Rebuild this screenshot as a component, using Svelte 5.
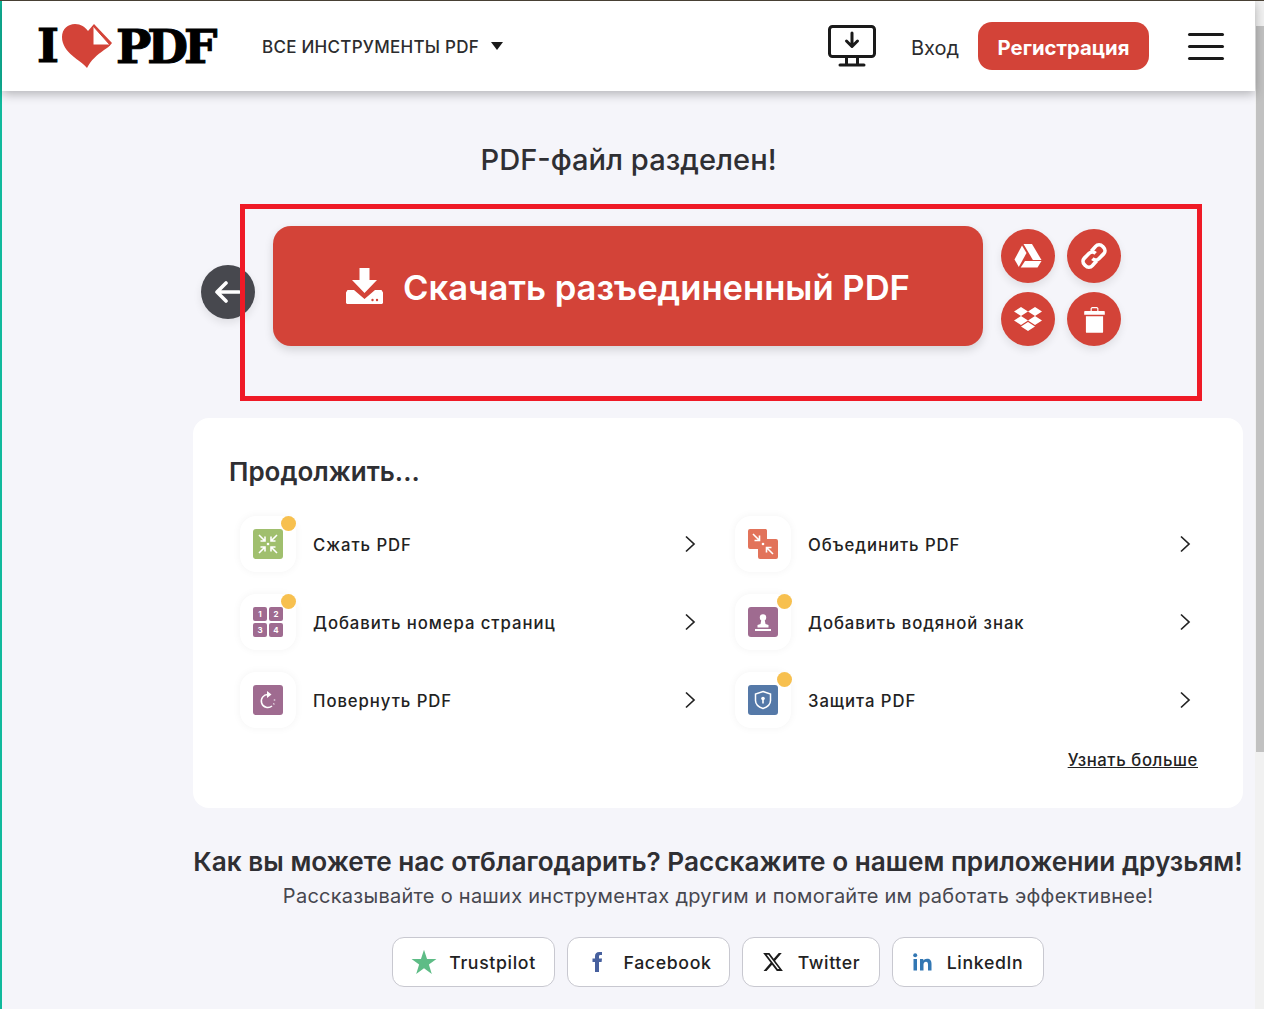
<script>
  const tools = [
    { key: 'compress', label: 'Сжать PDF', dot: true },
    { key: 'merge', label: 'Объединить PDF', dot: false },
    { key: 'numbers', label: 'Добавить номера страниц', dot: true },
    { key: 'stamp', label: 'Добавить водяной знак', dot: true },
    { key: 'rotate', label: 'Повернуть PDF', dot: false },
    { key: 'protect', label: 'Защита PDF', dot: true }
  ];
</script>

<div class="root">
  <div class="topline"></div>
  <div class="body">
    <div class="rail"></div>
    <main class="main">
      <header class="header">
        <div class="logo">
          <span class="logo-i">I</span>
          <svg class="heart" viewBox="0 0 52 46" width="52" height="46" aria-hidden="true">
            <path d="M26 45C20 37 1 30 1 14 1 6 7 1 14 1c6 0 10 3 13 7l6-7 18 19c-2 3-5 5-8 7-7 5-13 10-17 18z" fill="#d34338"/>
            <path d="M32 3v19h17z" fill="#fff" stroke="#d34338" stroke-width="1"/>
          </svg>
          <span class="logo-pdf">PDF</span>
        </div>
        <div class="nav">ВСЕ ИНСТРУМЕНТЫ PDF<span class="caret"></span></div>
        <div class="right">
          <svg class="monitor" viewBox="0 0 48 42" width="48" height="42" fill="none" stroke="#1a1a1a" stroke-width="3" aria-hidden="true">
            <rect x="1.500" y="1.500" width="45" height="30" rx="3"/>
            <path d="M24 8v13M18.500 16l5.500 5.500 5.500-5.500" stroke-linecap="round" stroke-linejoin="round"/>
            <path d="M18.500 32v7M29.500 32v7M12 40h24" stroke-linecap="round"/>
          </svg>
          <span class="login">Вход</span>
          <span class="register">Регистрация</span>
          <div class="burger"><i></i><i></i><i></i></div>
        </div>
      </header>

      <h1 class="title">PDF-файл разделен!</h1>

      <section class="actions">
        <div class="circle back">
          <svg viewBox="0 0 26 22" width="26" height="22" fill="none" stroke="#fff" stroke-width="3.600" stroke-linecap="round" stroke-linejoin="round" aria-hidden="true">
            <path d="M25 11H3M12 2 3 11l9 9"/>
          </svg>
        </div>
        <div class="download">
          <svg viewBox="0 0 37 36" width="37" height="36" fill="#fff" aria-hidden="true">
            <path d="M13.500 0h10v12H31L18.500 25 6 12h7.500z"/>
            <path d="M0 24.500 1.500 22H8l10.500 9L29 22h6.500l1.500 2.500V35l-1 1H1l-1-1z"/>
            <circle cx="26.500" cy="32" r="1.200" fill="#d34338"/><circle cx="31" cy="32" r="1.200" fill="#d34338"/>
          </svg>
          <span>Скачать разъединенный PDF</span>
        </div>
        <div class="side">
          <div class="circle red">
            <svg viewBox="0 0 28 26" width="28" height="26" fill="#fff" aria-hidden="true">
              <path d="M9.500 1h8.500l9.500 16h-8.600z"/><path d="M8 2.500 12.500 10 4.800 24 .5 16.500z"/><path d="M11 18h16.500l-4 6.500H6.700z"/>
            </svg>
          </div>
          <div class="circle red">
            <svg viewBox="0 0 28 28" width="30" height="30" fill="none" stroke="#fff" stroke-width="3.400" aria-hidden="true">
              <path d="M11.500 9.500l4-4.500a4.300 4.300 0 0 1 6.500 0l1 1a4.300 4.300 0 0 1 0 6l-4.500 4.500a4.300 4.300 0 0 1-6 0"/>
              <path d="M16.500 18.500l-4 4.500a4.300 4.300 0 0 1-6.500 0l-1-1a4.300 4.300 0 0 1 0-6l4.500-4.500a4.300 4.300 0 0 1 6 0"/>
            </svg>
          </div>
          <div class="circle red">
            <svg viewBox="0 0 24 24" width="28" height="28" fill="#fff" aria-hidden="true">
              <path d="M6 1.807L0 5.629l6 3.822 6.001-3.822L6 1.807zM18 1.807l-6 3.822 6 3.822 6-3.822-6-3.822zM0 13.274l6 3.822 6.001-3.822L6 9.452l-6 3.822zM18 9.452l-6 3.822 6 3.822 6-3.822-6-3.822zM6 18.371l6.001 3.822 6-3.822-6-3.822L6 18.371z"/>
            </svg>
          </div>
          <div class="circle red">
            <svg viewBox="0 0 22 28" width="21" height="27" fill="#fff" aria-hidden="true">
              <path d="M1 5h20a.8.8 0 0 1 .8.8V9H.2V5.800A.8.8 0 0 1 1 5z"/>
              <path d="M7.500 5V2.500L8.500 1.500h5l1 1V5" fill="none" stroke="#fff" stroke-width="1.200"/>
              <path d="M2 10.500h18V27a1 1 0 0 1-1 1H3a1 1 0 0 1-1-1z"/>
            </svg>
          </div>
        </div>
      </section>

      <section class="card">
        <h2 class="card-title">Продолжить...</h2>
        <div class="grid">
          {#each tools as t (t.key)}
            <div class="row">
              <div class="iconbox">
                {#if t.dot}<span class="dot"></span>{/if}
                {#if t.key === 'compress'}
                  <svg viewBox="0 0 30 30" width="30" height="30" aria-hidden="true">
                    <rect width="30" height="30" rx="3" fill="#a0bf6e"/>
                    <g fill="none" stroke="#fff" stroke-width="1.600">
                      <path d="M6 6l6 6M12 7.500V12H7.500M24 6l-6 6M18 7.500V12h4.500M6 24l6-6M12 22.500V18H7.500M24 24l-6-6M18 22.500V18h4.500"/>
                    </g>
                    <circle cx="15" cy="15" r="1.300" fill="#fff"/>
                  </svg>
                {:else if t.key === 'merge'}
                  <svg viewBox="0 0 30 30" width="30" height="30" aria-hidden="true">
                    <path d="M2 0h16a2 2 0 0 1 1 2v8h9a2 2 0 0 1 2 2v16a2 2 0 0 1-2 2H12a2 2 0 0 1-2-2v-8H2a2 2 0 0 1-2-2V2a2 2 0 0 1 2-2z" fill="#e2735a"/>
                    <path d="M5 5l6 6M11.500 6.500V11.500H6.500M25 25l-6-6M18.500 23.500V18.500h5" fill="none" stroke="#fff" stroke-width="1.600"/>
                    <circle cx="15" cy="15" r="1.300" fill="#fff"/>
                  </svg>
                {:else if t.key === 'numbers'}
                  <svg class="num" viewBox="0 0 30 30" width="30" height="30" aria-hidden="true">
                    <rect width="14" height="14" rx="2" fill="#9f6b90"/><rect x="16" width="14" height="14" rx="2" fill="#9f6b90"/>
                    <rect y="16" width="14" height="14" rx="2" fill="#9f6b90"/><rect x="16" y="16" width="14" height="14" rx="2" fill="#9f6b90"/>
                    <text x="7" y="10">1</text><text x="23" y="10">2</text><text x="7" y="26">3</text><text x="23" y="26">4</text>
                  </svg>
                {:else if t.key === 'stamp'}
                  <svg viewBox="0 0 30 30" width="30" height="30" aria-hidden="true">
                    <rect width="30" height="30" rx="3" fill="#9f6b90"/>
                    <circle cx="15" cy="10.500" r="3.200" fill="#fff"/>
                    <path d="M13.500 12h3l1 5 3 1v2.500H9.500V18l3-1z" fill="#fff"/>
                    <rect x="7" y="22" width="16" height="2" fill="#fff"/>
                  </svg>
                {:else if t.key === 'rotate'}
                  <svg viewBox="0 0 30 30" width="30" height="30" aria-hidden="true">
                    <rect width="30" height="30" rx="3" fill="#9f6b90"/>
                    <path d="M15 9.500a6.500 6.500 0 1 0 4 11.500" fill="none" stroke="#fff" stroke-width="1.500"/>
                    <path d="M14 6v7l4.500-3.500z" fill="#fff"/>
                    <path d="M21.500 14.500v1M21 18.500l-.4.800" stroke="#fff" stroke-width="1.500"/>
                  </svg>
                {:else}
                  <svg viewBox="0 0 30 30" width="30" height="30" aria-hidden="true">
                    <rect width="30" height="30" rx="3" fill="#5579a8"/>
                    <path d="M15 6.500 22.500 9v6.500c0 4-3 6.500-7.500 8-4.500-1.500-7.500-4-7.500-8V9z" fill="none" stroke="#fff" stroke-width="1.500"/>
                    <circle cx="15" cy="13.500" r="1.800" fill="#fff"/><rect x="14.200" y="14" width="1.600" height="4.500" fill="#fff"/>
                  </svg>
                {/if}
              </div>
              <span class="label">{t.label}</span>
              <svg class="chev" viewBox="0 0 12 18" width="12" height="18" fill="none" stroke="#222" stroke-width="1.700" aria-hidden="true"><path d="M2 1.500 10 9l-8 7.500"/></svg>
            </div>
          {/each}
        </div>
        <div class="more"><span>Узнать больше</span></div>
      </section>

      <section class="share">
        <h2>Как вы можете нас отблагодарить? Расскажите о нашем приложении друзьям!</h2>
        <p>Рассказывайте о наших инструментах другим и помогайте им работать эффективнее!</p>
        <div class="socials">
          <div class="social s1">
            <svg viewBox="0 0 24 24" width="26" height="26" aria-hidden="true"><path d="M12 .8l2.800 8.400h8.700l-7 5.200 2.700 8.600L12 17.700 4.800 23l2.700-8.600-7-5.200h8.700z" fill="#5ebc86"/></svg>
            <span>Trustpilot</span>
          </div>
          <div class="social s2">
            <svg viewBox="0 0 24 24" width="24" height="24" aria-hidden="true"><path d="M14 8.500V6.500c0-.9.3-1.500 1.600-1.500H17V2h-2.600C11.300 2 10 3.900 10 6.200V8.500H7.500V12H10v10h4V12h2.600l.4-3.500z" fill="#47609e"/></svg>
            <span>Facebook</span>
          </div>
          <div class="social s3">
            <svg viewBox="0 0 24 24" width="22" height="22" aria-hidden="true"><path d="M18.244 2.250h3.308l-7.227 8.260 8.502 11.240H16.170l-5.214-6.817L4.990 21.750H1.680l7.730-8.835L1.254 2.250H8.080l4.713 6.231zm-1.161 17.520h1.833L7.084 4.126H5.117z" fill="#1b1b1b"/></svg>
            <span>Twitter</span>
          </div>
          <div class="social s4">
            <svg viewBox="0 0 20 18" width="20" height="18" aria-hidden="true"><g fill="#3277b3"><circle cx="2.200" cy="2.200" r="2"/><rect x=".5" y="6" width="3.500" height="11.500"/><path d="M7 6h3.300v1.600C11 6.500 12.300 5.700 14 5.700c3.300 0 4.500 2 4.500 5.200v6.600H15V11.500c0-1.700-.5-2.800-2-2.800s-2.500 1.100-2.500 2.800v6H7z"/></g></svg>
            <span>LinkedIn</span>
          </div>
        </div>
      </section>
    </main>
    <div class="scrollbar"><div class="thumb"></div></div>
  </div>
  <div class="highlight"></div>
</div>

<style>
  :global(body) { overflow: hidden; }
  .root {
    position: relative;
    width: 1264px;
    height: 1009px;
    overflow: hidden;
    display: flex;
    flex-direction: column;
    font-family: Inter, "Noto Sans", sans-serif;
    background: #f5f5fa;
    color: #222;
  }
  .topline { height: 1px; background: #4d4538; flex: none; }
  .body { display: flex; flex: 1; min-height: 0; }
  .rail { width: 2px; background: #10b99c; flex: none; }
  .main { width: 1253px; flex: none; }
  .scrollbar { flex: 1; background: #f1f1f1; padding-top: 25px; }
  .thumb { height: 726px; background: #c1c1c1; margin-left: 1px; }

  .header {
    height: 90px;
    background: #fff;
    box-shadow: 0 3px 10px rgba(0, 0, 0, 0.28);
    display: flex;
    align-items: center;
    padding: 0 31px 0 35px;
    position: relative;
  }
  .logo { display: flex; align-items: center; width: 225px; height: 46px; color: #000; }
  .logo span {
    font-family: "DejaVu Serif", serif;
    font-weight: 700;
    font-size: 47px;
    line-height: 46px;
    -webkit-text-stroke: 1.100px #000;
  }
  .logo-i { margin-right: 2px; letter-spacing: 0; }
  .heart { flex: none; margin: 0 3px 0 0; }
  .logo-pdf { letter-spacing: -4px; margin-top: 2px; }
  .nav {
    font-size: 17px;
    font-weight: 500;
    letter-spacing: 0.27px;
    color: #2c2c2e;
    display: flex;
    align-items: center;
    white-space: nowrap;
    padding-top: 2px;
  }
  .caret {
    width: 0;
    height: 0;
    margin-left: 12px;
    margin-top: -2px;
    border-left: 6px solid transparent;
    border-right: 6px solid transparent;
    border-top: 8px solid #1a1a1a;
  }
  .right { margin-left: auto; display: flex; align-items: center; }
  .monitor { margin-right: 35px; }
  .login { font-size: 20px; color: #2c2c2e; margin-right: 19px; padding-top: 3px; }
  .register {
    width: 171px;
    height: 48px;
    padding-top: 3px;
    box-sizing: border-box;
    background: #d34338;
    border-radius: 14px;
    color: #fff;
    font-size: 20.300px;
    font-weight: 700;
    display: flex;
    align-items: center;
    justify-content: center;
    margin-right: 39px;
  }
  .burger { width: 36px; display: flex; flex-direction: column; gap: 9px; }
  .burger i { height: 3px; background: #1a1a1a; border-radius: 2px; display: block; }

  .title {
    margin: 0;
    padding-top: 50px;
    height: 85px;
    box-sizing: content-box;
    text-align: center;
    font-size: 29.100px;
    line-height: 38px;
    font-weight: 500;
    color: #2f2f33;
  }
  .actions { display: flex; height: 120px; margin-bottom: 72px; padding-left: 199px; }
  .circle {
    width: 54px;
    height: 54px;
    border-radius: 50%;
    display: flex;
    align-items: center;
    justify-content: center;
    flex: none;
    box-shadow: 0 4px 8px rgba(0, 0, 0, 0.09);
  }
  .back { background: #47484e; margin: 39px 18px 0 0; }
  .back svg { margin-right: 2px; }
  .red { background: #d34338; }
  .download {
    width: 710px;
    height: 120px;
    background: #d34338;
    border-radius: 18px;
    box-shadow: 0 4px 10px rgba(0, 0, 0, 0.14);
    display: flex;
    align-items: center;
    justify-content: center;
    gap: 20px;
    color: #fff;
    font-size: 34.600px;
    font-weight: 600;
  }
  .download span { padding-top: 1px; }
  .side {
    margin-left: 18px;
    padding-top: 3px;
    display: grid;
    grid-template-columns: 54px 54px;
    grid-auto-rows: 54px;
    column-gap: 12px;
    row-gap: 9px;
  }

  .card {
    margin-left: 191px;
    width: 1050px;
    height: 390px;
    box-sizing: border-box;
    background: #fff;
    border-radius: 16px;
    padding: 36px 45px 0 36px;
  }
  .card-title { margin: 0 0 26px; font-size: 26px; line-height: 36px; font-weight: 600; color: #2f2f33; }
  .grid { display: grid; grid-template-columns: 495px 495px; padding-left: 11px; margin-right: -50px; grid-auto-rows: 78px; }
  .row { display: flex; align-items: flex-start; }
  .row:nth-child(even) .dot { right: -1px; }
  .iconbox {
    position: relative;
    width: 56px;
    height: 56px;
    border-radius: 16px;
    background: #fff;
    box-shadow: 0 0 8px rgba(0, 0, 0, 0.05);
    display: flex;
    align-items: center;
    justify-content: center;
    flex: none;
  }
  .dot { position: absolute; top: 0; right: 0; width: 15px; height: 15px; border-radius: 50%; background: #f7c04f; }
  .num text { font: 700 8px Inter, sans-serif; fill: #fff; text-anchor: middle; }
  .label {
    margin-left: 17px;
    padding-top: 1px;
    line-height: 56px;
    font-size: 16.700px;
    font-weight: 500;
    letter-spacing: 0.95px;
    color: #222;
    white-space: nowrap;
  }
  .chev { margin-left: auto; margin-right: 39px; margin-top: 19px; }
  .more { text-align: right; }
  .more span {
    font-size: 16.700px;
    font-weight: 500;
    letter-spacing: 0.6px;
    text-decoration: underline;
    color: #222;
  }

  .share { margin-left: 191px; width: 1050px; text-align: center; padding-top: 38px; }
  .share h2 { margin: 0; font-size: 26.200px; line-height: 32px; font-weight: 600; color: #2f2f33; white-space: nowrap; }
  .share p { margin: 3px 0 26px; font-size: 20px; letter-spacing: 0.26px; line-height: 30px; color: #47474f; white-space: nowrap; }
  .socials { display: flex; justify-content: center; gap: 12px; }
  .social {
    height: 50px;
    box-sizing: border-box;
    border: 1px solid #c8c8d0;
    border-radius: 12px;
    background: #fff;
    display: flex;
    align-items: center;
    justify-content: center;
    gap: 12px;
    font-size: 17.700px;
    font-weight: 500;
    letter-spacing: 0.65px;
    color: #222;
  }
  .s1 { width: 163px; }
  .s2 { width: 163px; gap: 14px; }
  .s3 { width: 138px; gap: 14px; }
  .s4 { width: 152px; gap: 14px; }

  .highlight {
    position: absolute;
    left: 240px;
    top: 204px;
    width: 962px;
    height: 197px;
    box-sizing: border-box;
    border: 5px solid #ef1a26;
    pointer-events: none;
  }
</style>
